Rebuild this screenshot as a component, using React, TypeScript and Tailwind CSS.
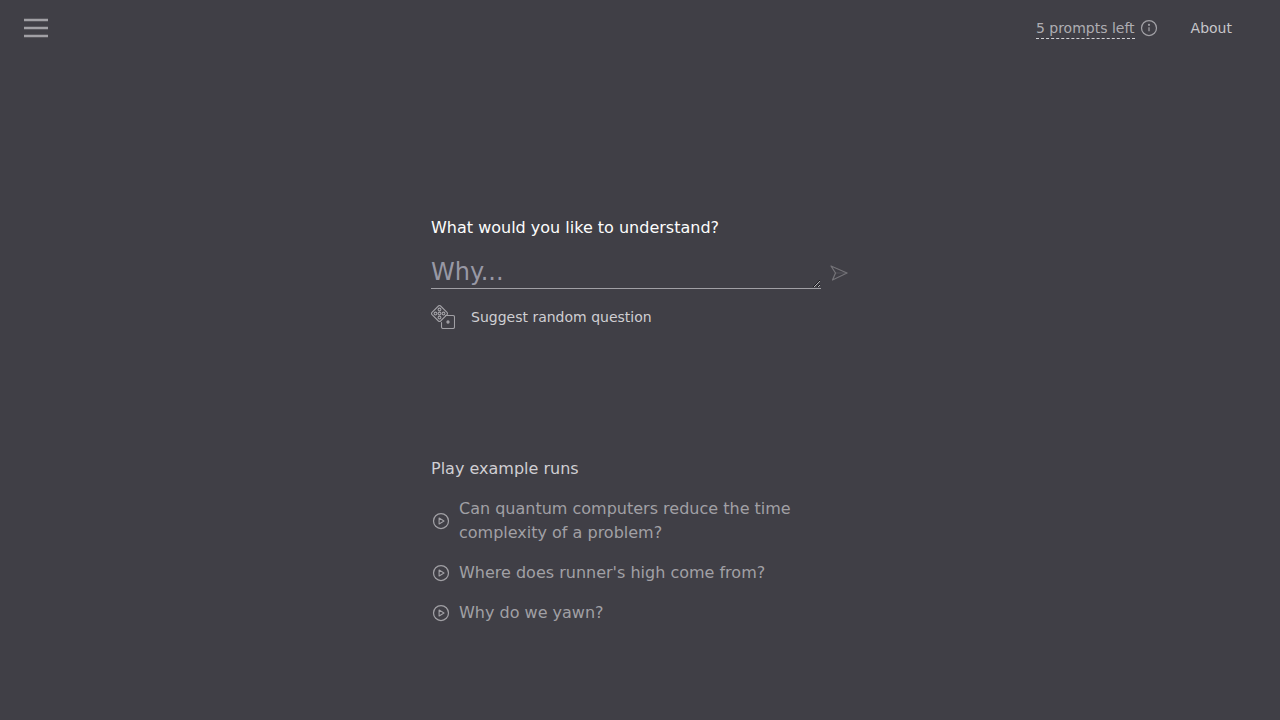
import React from "react";

function PlayIcon() {
  return (
    <svg width="18" height="18" viewBox="0 0 18 18" fill="none" stroke="#a3a2a7" strokeWidth="1.25" strokeLinejoin="round" className="shrink-0">
      <circle cx="9" cy="9" r="7.5" />
      <path d="M7.1 6v6l4.9-3z" strokeWidth="1.1" />
    </svg>
  );
}

function Example({ children }: { children: React.ReactNode }) {
  return (
    <div className="flex items-center gap-[9px] text-[#a3a2a7] pl-px">
      <PlayIcon />
      <span className="text-base leading-6 w-[350px]">{children}</span>
    </div>
  );
}

export default function App() {
  return (
    <div className="min-h-[720px] bg-[#403f46] font-['DejaVu_Sans',sans-serif] flex flex-col overflow-hidden">
      <header className="h-14 flex items-center justify-between pl-6 pr-12 opacity-[0.99]">
        <svg width="24" height="24" viewBox="0 0 24 24" fill="none" stroke="#a3a2a7" strokeWidth="2.6" className="block">
          <path d="M0 4h24M0 12h24M0 20h24" />
        </svg>
        <div className="flex items-center text-sm">
          <span className="text-[#b0afb4] border-b border-dashed border-[#d4d4d8] leading-5">5 prompts left</span>
          <svg width="18" height="18" viewBox="0 0 18 18" fill="none" stroke="#a3a2a7" strokeWidth="1.25" className="ml-[5px]">
            <circle cx="9" cy="9" r="7.5" />
            <path d="M9 8.2v4" />
            <circle cx="9" cy="5.8" r="0.5" fill="#a3a2a7" />
          </svg>
          <span className="ml-[33px] text-[#c9c8cc]">About</span>
        </div>
      </header>
      <main className="w-[418px] ml-[431px] pt-[160px] flex flex-col opacity-[0.99]">
        <div className="text-base leading-6 text-white">What would you like to understand?</div>
        <div className="flex items-center mt-[14px] gap-[9px]">
          <textarea
            rows={1}
            placeholder="Why..."
            className="w-[390px] h-[35px] pt-0.5 bg-transparent outline-none border-b border-[#a3a2a7] text-2xl leading-8 placeholder:text-[#9a9aa6] text-white"
          />
          <svg width="18" height="16" viewBox="0 0 18 16" fill="none" stroke="#757479" strokeWidth="1.25" strokeLinejoin="round" strokeLinecap="round" className="translate-y-px">
            <path d="M1 1 17 8 2.5 15 5.5 8z" />
            <path d="M5.5 8H17" strokeOpacity="0.45" strokeWidth="1" />
          </svg>
        </div>
        <div className="flex items-center mt-4 gap-4">
          <svg width="24" height="24" viewBox="0 0 24 24" fill="none" stroke="#a3a2a7" strokeWidth="1.1" strokeLinejoin="round" strokeLinecap="round">
            <path d="M7.4 1q1.1-1 2.2 0l6.4 6.4q1 1.1 0 2.2L9.6 16q-1.1 1-2.2 0L1 9.6q-1-1.1 0-2.2z" />
            <circle cx="8.5" cy="4.5" r="1.4" />
            <circle cx="4.5" cy="8.5" r="1.4" />
            <circle cx="12.5" cy="8.5" r="1.4" />
            <circle cx="8.5" cy="12.5" r="1.4" />
            <circle cx="8.5" cy="8.5" r="1.4" />
            <path d="M14.5 10.5h7.5q1.5 0 1.5 1.5v10q0 1.5-1.5 1.5H12q-1.5 0-1.5-1.5V17.5" />
            <circle cx="17" cy="17" r="1.1" fill="#a3a2a7" />
          </svg>
          <span className="text-sm leading-5 text-[#d2d1d5]">Suggest random question</span>
        </div>
        <div className="mt-[128px] text-base leading-6 text-[#d2d1d5]">Play example runs</div>
        <div className="mt-[16px] flex flex-col gap-4">
          <Example>Can quantum computers reduce the time complexity of a problem?</Example>
          <Example>Where does runner's high come from?</Example>
          <Example>Why do we yawn?</Example>
        </div>
      </main>
    </div>
  );
}
